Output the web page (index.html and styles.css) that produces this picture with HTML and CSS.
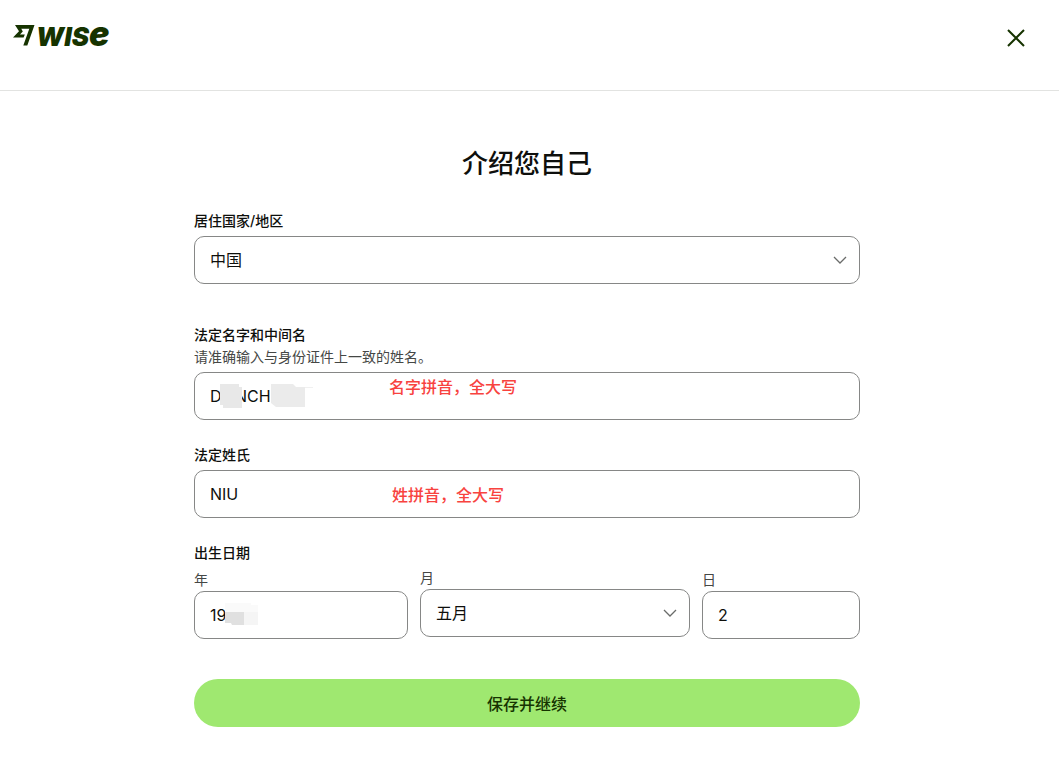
FILE: index.html
```html
<!DOCTYPE html>
<html lang="zh-CN">
<head>
  <meta charset="UTF-8">
  <meta name="viewport" content="width=device-width, initial-scale=1.0">
  <title>介绍您自己</title>
  <link rel="stylesheet" href="styles.css">
</head>
<body>
<header class="header">
  <a class="logo" href="#">
    <svg class="logo-flag" width="24" height="22" viewBox="0 0 24 22" aria-hidden="true">
      <path d="M3 1H22.500L15.300 21.500H11.300L17.300 4.800H9.300L10.800 7.500L8 10.600H12.800L11.600 13.600H1L7 7.200Z" fill="#163300"/>
    </svg>
    <span class="logo-text">WIS<span class="logo-e">e</span></span>
  </a>
  <button class="close" type="button" aria-label="关闭">
    <svg width="20" height="20" viewBox="0 0 20 20" aria-hidden="true">
      <path d="M2 2L18 18M18 2L2 18" fill="none" stroke="#163300" stroke-width="2"/>
    </svg>
  </button>
</header>

<main class="main">
  <form class="form">
    <h1>介绍您自己</h1>

    <div class="form-group country">
      <label for="country">居住国家/地区</label>
      <div class="control">
        <select id="country">
          <option>中国</option>
        </select>
        <svg class="chevron" width="14" height="8" viewBox="0 0 14 8" aria-hidden="true">
          <path d="M1 1L7 7L13 1" fill="none" stroke="#6a6c6a" stroke-width="1.300"/>
        </svg>
      </div>
    </div>

    <div class="form-group with-hint">
      <label for="first-name">法定名字和中间名</label>
      <p class="hint" id="name-hint">请准确输入与身份证件上一致的姓名。</p>
      <div class="control">
        <input type="text" id="first-name" aria-describedby="name-hint" value="D&nbsp;&nbsp;&nbsp;NCH">
        <svg class="mask mask-name" width="94" height="26" viewBox="0 0 94 26" aria-hidden="true">
          <path d="M0 1H19V4H22V25H3V22H0Z" fill="#e8e8e8"/>
          <path d="M51 1H73L76 4H85V24H56L51 20Z" fill="#ebebeb"/>
          <path d="M85 4H93V5H85Z" fill="#f0f0f0"/>
        </svg>
        <span class="note note-top">名字拼音，全大写</span>
      </div>
    </div>

    <div class="form-group">
      <label for="last-name">法定姓氏</label>
      <div class="control">
        <input type="text" id="last-name" value="NIU">
        <span class="note note-middle">姓拼音，全大写</span>
      </div>
    </div>

    <fieldset class="birth">
      <legend>出生日期</legend>
      <div class="birth-row">
        <div class="birth-field number">
          <label for="year">年</label>
          <div class="control">
            <input type="text" id="year" inputmode="numeric" value="19">
            <svg class="mask mask-year" width="34" height="24" viewBox="0 0 34 24" aria-hidden="true">
              <path d="M0 1H26V3H33V11H0Z" fill="#fafafa"/>
              <path d="M0 10H19V23H7L6 21H0Z" fill="#e0e0e0"/>
              <path d="M19 10H33V23H19Z" fill="#f5f5f5"/>
            </svg>
          </div>
        </div>
        <div class="birth-field">
          <label for="month">月</label>
          <div class="control">
            <select id="month">
              <option>五月</option>
            </select>
            <svg class="chevron" width="14" height="8" viewBox="0 0 14 8" aria-hidden="true">
              <path d="M1 1L7 7L13 1" fill="none" stroke="#6a6c6a" stroke-width="1.300"/>
            </svg>
          </div>
        </div>
        <div class="birth-field number">
          <label for="day">日</label>
          <div class="control">
            <input type="text" id="day" inputmode="numeric" value="2">
          </div>
        </div>
      </div>
    </fieldset>

    <button class="submit" type="submit">保存并继续</button>
  </form>
</main>
</body>
</html>
```
FILE: styles.css
```css
* {
  box-sizing: border-box;
}
body {
  margin: 0;
  background-color: #fff;
  color: #0e0f0c;
  font-family: Inter, "Noto Sans CJK SC", sans-serif;
  font-size: 14px;
  line-height: 22px;
}
.header {
  display: flex;
  justify-content: space-between;
  align-items: flex-start;
  height: 91px;
  padding: 22px 32px 0 12px;
  border-bottom: 1px solid #e2e3e1;
}
.logo {
  display: flex;
  align-items: center;
  height: 26px;
  color: #163300;
  text-decoration: none;
}
.logo-text {
  font-size: 26px;
  font-style: italic;
  font-weight: 900;
  line-height: 26px;
}
.logo-e {
  font-size: 34px;
  line-height: 26px;
}
.close {
  display: flex;
  padding: 6px;
  margin-right: -5px;
  border: 0;
  background: none;
  cursor: pointer;
}
.main {
  padding: 57px 21px 52px 16px;
}
.form {
  max-width: 666px;
  margin: 0 auto;
}
h1 {
  margin: 0 0 30px;
  font-size: 26px;
  font-weight: 500;
  line-height: 32px;
  text-align: center;
}
.form-group {
  margin-bottom: 24px;
}
.form-group.country {
  margin-bottom: 40px;
}
.form-group label, legend {
  display: block;
  padding: 0;
  font-weight: 500;
}
.form-group label {
  margin-bottom: 4px;
}
.form-group.with-hint label {
  margin-bottom: 0;
}
.hint {
  margin: 0 0 4px;
  color: #454745;
}
.control {
  position: relative;
}
input, select {
  display: block;
  width: 100%;
  height: 48px;
  padding: 0 15px;
  border: 1px solid #868786;
  border-radius: 10px;
  background-color: #fff;
  color: #0e0f0c;
  font-family: inherit;
  font-size: 16px;
  appearance: none;
}
.chevron {
  position: absolute;
  top: 20px;
  right: 13px;
  pointer-events: none;
}
.mask {
  position: absolute;
  pointer-events: none;
}
.mask-name {
  top: 11px;
  left: 26px;
}
.mask-year {
  top: 11px;
  left: 31px;
}
.note {
  position: absolute;
  color: #f8433f;
  font-size: 16px;
  font-weight: 500;
  line-height: 24px;
  pointer-events: none;
}
.note-top {
  top: 3px;
  left: 195px;
}
.note-middle {
  top: 13px;
  left: 198px;
}
.birth {
  min-width: 0;
  margin: 0 0 40px;
  padding: 0;
  border: 0;
}
.birth-row {
  display: grid;
  grid-template-columns: 214fr 270fr 158fr;
  gap: 12px;
  align-items: start;
  padding-top: 3px;
}
.birth-field label {
  display: block;
  color: #454745;
}
.birth-field.number {
  padding-top: 2px;
}
.submit {
  display: block;
  width: 100%;
  height: 48px;
  border: 0;
  border-radius: 24px;
  background-color: #9fe870;
  color: #163300;
  font-family: inherit;
  font-size: 16px;
  font-weight: 500;
  cursor: pointer;
}
```
